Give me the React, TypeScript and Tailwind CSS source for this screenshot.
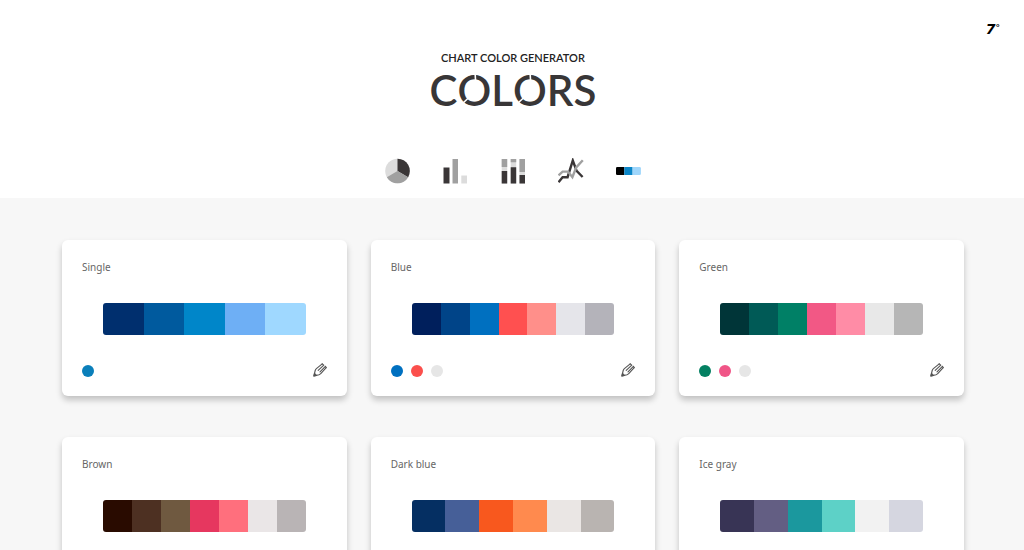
import React from "react";

type Palette = { name: string; swatches: string[]; dots: string[] };

const palettes: Palette[] = [
  {
    name: "Single",
    swatches: ["bg-[#002f6e]", "bg-[#005a9e]", "bg-[#0086c9]", "bg-[#6eaff5]", "bg-[#9fd8ff]"],
    dots: ["bg-[#0a7fba]"],
  },
  {
    name: "Blue",
    swatches: ["bg-[#001f5c]", "bg-[#004488]", "bg-[#0070c0]", "bg-[#ff5050]", "bg-[#ff8f8a]", "bg-[#e5e5ea]", "bg-[#b4b3ba]"],
    dots: ["bg-[#0070c0]", "bg-[#fb4f4c]", "bg-[#e6e6e6]"],
  },
  {
    name: "Green",
    swatches: ["bg-[#003538]", "bg-[#005a56]", "bg-[#008066]", "bg-[#f25885]", "bg-[#ff8ca6]", "bg-[#e8e8e8]", "bg-[#b6b6b6]"],
    dots: ["bg-[#048062]", "bg-[#f05587]", "bg-[#e6e6e6]"],
  },
  {
    name: "Brown",
    swatches: ["bg-[#290b00]", "bg-[#4d3022]", "bg-[#6f5940]", "bg-[#e6375f]", "bg-[#ff6f7d]", "bg-[#eae6e7]", "bg-[#b9b4b5]"],
    dots: ["bg-[#6f5940]", "bg-[#e6375f]", "bg-[#e6e6e6]"],
  },
  {
    name: "Dark blue",
    swatches: ["bg-[#052f62]", "bg-[#465f98]", "bg-[#f8581e]", "bg-[#ff8a4e]", "bg-[#eae6e4]", "bg-[#b9b4b1]"],
    dots: ["bg-[#052f62]", "bg-[#f8581e]", "bg-[#e6e6e6]"],
  },
  {
    name: "Ice gray",
    swatches: ["bg-[#383455]", "bg-[#635e83]", "bg-[#1b989e]", "bg-[#5dd1c7]", "bg-[#f2f2f2]", "bg-[#d5d6e0]"],
    dots: ["bg-[#383455]", "bg-[#1b989e]", "bg-[#e6e6e6]"],
  },
];

const chartTypes: { label: string; drawing: React.ReactNode }[] = [
  {
    label: "Pie chart",
    drawing: (
      <>
        <circle cx="13.5" cy="13" r="12.3" fill="#dcdcdc" />
        <path d="M13.5 13V.7A12.3 12.3 0 0 1 24.15 19.15Z" fill="#3a3637" />
        <path d="M13.5 13L24.15 19.15A12.3 12.3 0 0 1 2.85 19.15Z" fill="#a0a0a0" />
      </>
    ),
  },
  {
    label: "Bar chart",
    drawing: (
      <>
        <path d="M1.5 9.5h6v16h-6z" fill="#3a3637" />
        <path d="M10.5 1h5.5v24.5h-5.5z" fill="#a0a0a0" />
        <path d="M19.3 17.5h5.7v8h-5.7z" fill="#dcdcdc" />
      </>
    ),
  },
  {
    label: "Stacked bar chart",
    drawing: (
      <>
        <path d="M1.7 1h5.5v24.5H1.7zM10.7 1h5.5v24.5h-5.5zM19.5 1H25v24.5h-5.5z" fill="#dcdcdc" />
        <path d="M1.7 1h5.5v8H1.7zM10.7 1h5.5v3.3h-5.5zM19.5 1H25v13h-5.5z" fill="#a0a0a0" />
        <path d="M1.7 13h5.5v12.5H1.7zM10.7 9.3h5.5v16.2h-5.5zM19.5 17H25v8.5h-5.5z" fill="#3a3637" />
      </>
    ),
  },
  {
    label: "Line chart",
    drawing: (
      <g fill="none" strokeWidth="2.4">
        <path d="M.5 24.2L4.6 19.2H9.6L14.8 2.5L18.6 12.8L24.6 19" stroke="#3a3637" />
        <path d="M.5 17.3L4.6 13.6H10L14.4 19.2L18.2 9.5L24.8 2.2" stroke="#a0a0a0" />
      </g>
    ),
  },
  {
    label: "Color palette",
    drawing: (
      <>
        <path d="M8.3 9H1.3Q0 9 0 10.3V15.7Q0 17 1.3 17H8.3Z" fill="#000" />
        <path d="M8.3 9h8.3v8H8.3z" fill="#0b86c8" />
        <path d="M16.6 9h7q1.3 0 1.3 1.3v5.4q0 1.3-1.3 1.3h-7z" fill="#9fd6fb" />
      </>
    ),
  },
];

function CutO() {
  return (
    <span className="relative inline-block">
      O
      <svg aria-hidden="true" viewBox="0 0 33 48" className="absolute inset-0 h-full w-full" stroke="#fff" strokeWidth="1.6" fill="none">
        <path d="M16.7 7L17.3 17M10.5 31.5L3 38.5" />
      </svg>
    </span>
  );
}

function PencilIcon() {
  return (
    <svg aria-hidden="true" viewBox="0 0 14 14" className="size-[14px]" fill="none" stroke="#555" strokeWidth="1.1" strokeLinecap="round" strokeLinejoin="round">
      <path d="M9.2 .9L3.4 5.6Q2.5 6.4 2.2 7.5L.9 13L6 11.7Q7.2 11.3 8 10.4L13.2 4.6" />
      <path d="M10.8 2.2L5.2 7.4M12.4 3.3L7 8.8M9.2 .9L10.8 2.2M12.4 3.3L13.2 4.6" />
      <path d="M1.5 10.4L.9 13L3.5 12.4Z" fill="#444" />
    </svg>
  );
}

function PaletteCard({ palette }: { palette: Palette }) {
  return (
    <article className="rounded-md bg-white px-5 pt-[19px] pb-[17px] shadow-[0_4px_6px_rgba(0,0,0,0.22)]">
      <h2 className="text-[10px] leading-4 text-[#666]">{palette.name}</h2>
      <div className="mx-[21px] mt-7 flex h-8 overflow-hidden rounded-[3px]">
        {palette.swatches.map((color) => (
          <span key={color} className={`flex-1 ${color}`} />
        ))}
      </div>
      <div className="mt-7 flex h-4 items-center justify-between">
        <div className="flex gap-2">
          {palette.dots.map((color, i) => (
            <button key={color} type="button" aria-label={`${palette.name} color ${i + 1}`} className={`size-3 rounded-full ${color}`} />
          ))}
        </div>
        <button type="button" aria-label={`Edit ${palette.name}`} className="pb-0.5">
          <PencilIcon />
        </button>
      </div>
    </article>
  );
}

export default function App() {
  return (
    <div className="min-h-screen bg-[#f7f7f7] font-['Noto_Sans','Open_Sans',sans-serif]">
      <header className="relative bg-white pt-[50px] pb-[14px] pl-0.5 font-[Lato,sans-serif]">
        <a href="#" aria-label="7 degrees" className="absolute top-5 right-6 flex items-start font-['DejaVu_Sans',sans-serif] text-black">
          <span className="text-[14px] leading-[18px] font-bold italic">7</span>
          <span className="text-[9px] leading-4 font-bold">°</span>
        </a>
        <h1 className="flex flex-col items-center">
          <span className="text-[11px] leading-4 font-semibold text-[#222]">CHART COLOR GENERATOR</span>
          <span className="text-[42px] leading-[48px] font-semibold text-[#383637]">
            C<CutO />L<CutO />RS
          </span>
        </h1>
        <nav aria-label="Chart types" className="mt-11 flex justify-center gap-8">
          {chartTypes.map((type) => (
            <button key={type.label} type="button" aria-label={type.label}>
              <svg aria-hidden="true" viewBox="0 0 26 26" className="size-[26px]">
                {type.drawing}
              </svg>
            </button>
          ))}
        </nav>
      </header>
      <main className="grid grid-cols-3 gap-x-6 gap-y-[41px] pt-[42px] pr-[60px] pb-10 pl-[62px]">
        {palettes.map((palette) => (
          <PaletteCard key={palette.name} palette={palette} />
        ))}
      </main>
    </div>
  );
}
